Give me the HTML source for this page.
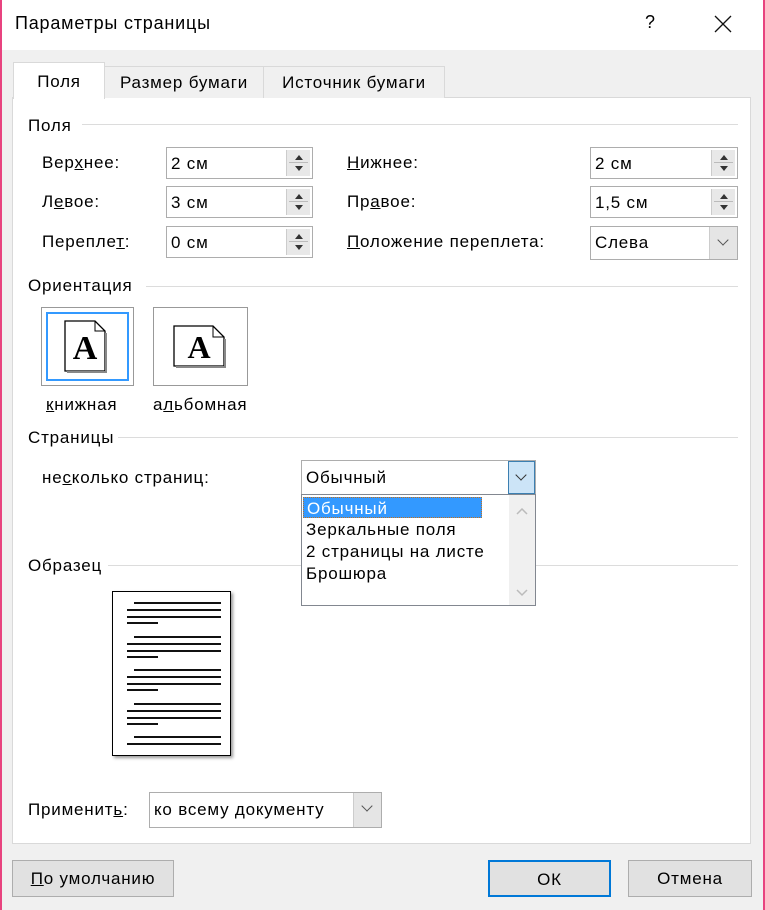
<!DOCTYPE html>
<html><head><meta charset="utf-8"><style>
*{box-sizing:border-box;margin:0;padding:0}
body{width:765px;height:910px;background:#f0f0f0;position:relative;overflow:hidden;font-family:"Liberation Sans","DejaVu Sans",sans-serif;font-size:17px;letter-spacing:0.8px;color:#000}
.a{position:absolute;white-space:nowrap}
.title{left:0;top:0;width:765px;height:50px;background:#fff}
.pb{position:absolute;top:0;bottom:0;width:2px;background:#e8437f}
.panel{left:12px;top:97px;width:739px;height:747px;background:#fff;border:1px solid #d9d9d9}
.tab{height:32px;top:66px;background:#f0f0f0;border:1px solid #d9d9d9;border-bottom:none;padding-top:6px;text-align:center}
.sec{height:1px;background:#dcdcdc}
.inp{background:#fff;border:1px solid #adadad;height:32px;padding:6px 0 0 4px}
.spin{position:absolute;right:2px;top:2px;width:24px;height:26px;background:#e8e8e8;border-left:1px solid #ccc}
.spin:before{content:"";position:absolute;left:8px;top:5px;border:4px solid transparent;border-bottom:5px solid #333;border-top:none}
.spin:after{content:"";position:absolute;left:8px;top:16px;border:4px solid transparent;border-top:5px solid #333;border-bottom:none}
.spin i{position:absolute;left:2px;right:2px;top:12px;height:1px;background:#bbb}
.dd{position:absolute;right:0;top:0;bottom:0;width:28px;background:#e5e5e5;border-left:1px solid #ccc}
.dd:after{content:"";position:absolute;left:9px;top:9px;width:7px;height:7px;border-right:1px solid #555;border-bottom:1px solid #555;transform:rotate(45deg)}
u{text-decoration:underline}
.btn{height:37px;background:#e1e1e1;border:1px solid #adadad;text-align:center;padding-top:8px}
.ln{position:absolute;height:2px;background:#111}
</style></head><body>
<div class="a title"></div>
<div class="pb" style="left:0"></div><div class="pb" style="right:0"></div>
<div class="a" style="left:15px;top:13px;font-size:18px">Параметры страницы</div>
<div class="a" style="left:645px;top:12px;font-size:18px">?</div>
<svg class="a" style="left:714px;top:15px" width="18" height="18"><path d="M1 1L17 17M17 1L1 17" stroke="#111" stroke-width="1.3"/></svg>

<div class="a panel"></div>
<div class="a tab" style="left:104px;width:160px">Размер бумаги</div>
<div class="a tab" style="left:263px;width:182px">Источник бумаги</div>
<div class="a tab" style="left:13px;width:92px;top:62px;height:37px;background:#fff;padding-top:9px">Поля</div>

<div class="a" style="left:28px;top:116px">Поля</div>
<div class="a sec" style="left:82px;top:124px;width:656px"></div>

<div class="a" style="left:42px;top:153px">Вер<u>х</u>нее:</div>
<div class="a inp" style="left:166px;top:147px;width:147px">2 см<div class="spin"><i></i></div></div>
<div class="a" style="left:42px;top:192px">Л<u>е</u>вое:</div>
<div class="a inp" style="left:166px;top:186px;width:147px">3 см<div class="spin"><i></i></div></div>
<div class="a" style="left:42px;top:232px">Перепле<u>т</u>:</div>
<div class="a inp" style="left:166px;top:226px;width:147px">0 см<div class="spin"><i></i></div></div>

<div class="a" style="left:347px;top:153px"><u>Н</u>ижнее:</div>
<div class="a inp" style="left:590px;top:147px;width:148px">2 см<div class="spin"><i></i></div></div>
<div class="a" style="left:347px;top:192px">Пр<u>а</u>вое:</div>
<div class="a inp" style="left:590px;top:186px;width:148px">1,5 см<div class="spin"><i></i></div></div>
<div class="a" style="left:347px;top:232px"><u>П</u>оложение переплета:</div>
<div class="a inp" style="left:590px;top:226px;width:148px;height:34px;padding-top:6px">Слева<div class="dd"></div></div>

<div class="a" style="left:28px;top:276px">Ориентация</div>
<div class="a sec" style="left:146px;top:286px;width:592px"></div>
<div class="a" style="left:41px;top:307px;width:93px;height:79px;border:1px solid #999;padding:4px"><div style="width:83px;height:69px;border:2px solid #3399ff"></div></div>
<svg class="a" style="left:64px;top:320px" width="44" height="54"><path d="M1 1H31L41 11V51H1Z" fill="#fff" stroke="#000" stroke-width="1.3"/><path d="M31 1V11H41" fill="none" stroke="#000"/><path d="M3 52H42V13" fill="none" stroke="#888" stroke-width="2"/><text x="21" y="39" font-family="Liberation Serif" font-size="34" text-anchor="middle" font-weight="bold" letter-spacing="0">A</text></svg>
<div class="a" style="left:153px;top:307px;width:95px;height:79px;border:1px solid #999"></div>
<svg class="a" style="left:173px;top:325px" width="56" height="44"><path d="M1 1H40L51 12V41H1Z" fill="#fff" stroke="#000" stroke-width="1.3"/><path d="M40 1V12H51" fill="none" stroke="#000"/><path d="M3 42H52V14" fill="none" stroke="#888" stroke-width="2"/><text x="26" y="33" font-family="Liberation Serif" font-size="32" text-anchor="middle" font-weight="bold" letter-spacing="0">A</text></svg>
<div class="a" style="left:46px;top:395px"><u>к</u>нижная</div>
<div class="a" style="left:153px;top:395px">а<u>л</u>ьбомная</div>

<div class="a" style="left:28px;top:428px">Страницы</div>
<div class="a sec" style="left:118px;top:437px;width:620px"></div>
<div class="a" style="left:42px;top:468px">не<u>с</u>колько страниц:</div>

<div class="a" style="left:28px;top:556px">Образец</div>
<div class="a sec" style="left:108px;top:565px;width:630px"></div>

<div class="a inp" style="left:301px;top:460px;width:235px;height:35px;padding-top:7px">Обычный<div style="position:absolute;right:0;top:0;width:27px;height:33px;background:#cce4f7;border:1px solid #3c7fb1"><div style="position:absolute;left:8px;top:9px;width:8px;height:8px;border-right:1px solid #333;border-bottom:1px solid #333;transform:rotate(45deg)"></div></div></div>
<div class="a" style="left:301px;top:494px;width:235px;height:112px;background:#fff;border:1px solid #828790">
<div style="position:absolute;left:1px;top:2px;width:179px;height:21px;background:#3399ff;color:#fff;border:1px dotted #c07020;padding:1px 0 0 3px">Обычный</div>
<div style="position:absolute;left:4px;top:24px;line-height:22px">Зеркальные поля<br>2 страницы на листе<br>Брошюра</div>
<div style="position:absolute;right:0;top:0;width:26px;height:110px;background:#f0f0f0"><svg width="26" height="110"><path d="M8 19L13 14L18 19M8 95L13 100L18 95" fill="none" stroke="#bbb" stroke-width="1.5"/></svg></div>
</div>

<div class="a" style="left:112px;top:591px;width:119px;height:165px;background:#fff;border:1.5px solid #000;box-shadow:2px 2px 3px #999">
<div class="ln" style="left:21px;top:10px;width:87px"></div><div class="ln" style="left:14px;top:17px;width:94px"></div><div class="ln" style="left:14px;top:24px;width:94px"></div><div class="ln" style="left:14px;top:30px;width:31px"></div>
<div class="ln" style="left:21px;top:44px;width:87px"></div><div class="ln" style="left:14px;top:51px;width:94px"></div><div class="ln" style="left:14px;top:58px;width:94px"></div><div class="ln" style="left:14px;top:64px;width:31px"></div>
<div class="ln" style="left:21px;top:77px;width:87px"></div><div class="ln" style="left:14px;top:84px;width:94px"></div><div class="ln" style="left:14px;top:91px;width:94px"></div><div class="ln" style="left:14px;top:97px;width:31px"></div>
<div class="ln" style="left:21px;top:111px;width:87px"></div><div class="ln" style="left:14px;top:118px;width:94px"></div><div class="ln" style="left:14px;top:125px;width:94px"></div><div class="ln" style="left:14px;top:131px;width:31px"></div>
<div class="ln" style="left:21px;top:144px;width:87px"></div><div class="ln" style="left:14px;top:151px;width:94px"></div>
</div>

<div class="a" style="left:28px;top:800px">Применит<u>ь</u>:</div>
<div class="a inp" style="left:149px;top:792px;width:233px;height:36px;padding-top:7px">ко всему документу<div class="dd"></div></div>

<div class="a btn" style="left:12px;top:860px;width:162px"><u>П</u>о умолчанию</div>
<div class="a btn" style="left:488px;top:860px;width:123px;border:2px solid #0078d7">ОК</div>
<div class="a btn" style="left:628px;top:860px;width:124px">Отмена</div>
</body></html>
